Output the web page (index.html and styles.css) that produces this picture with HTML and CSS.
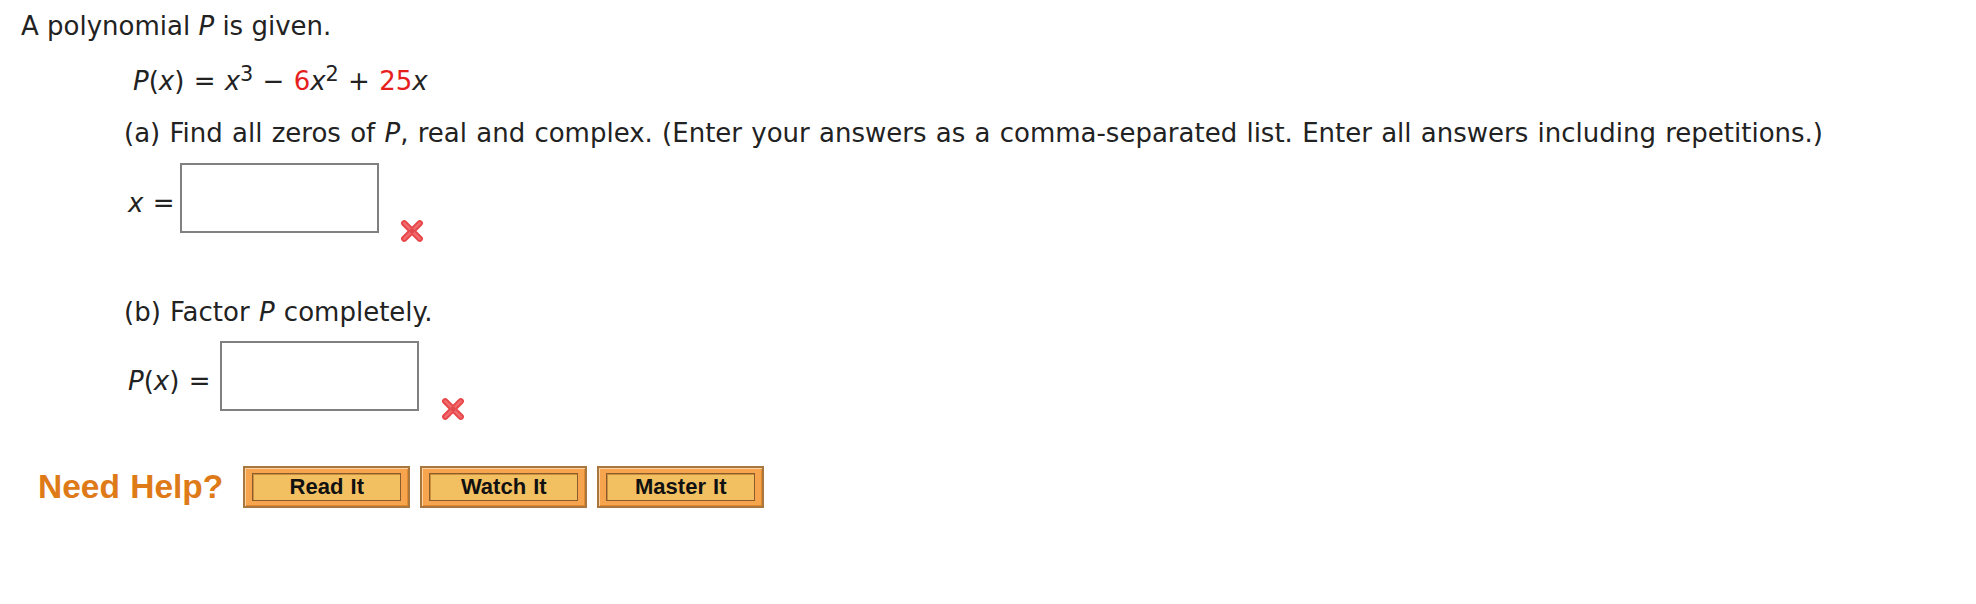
FILE: index.html
```html
<!DOCTYPE html>
<html>
<head>
<meta charset="utf-8">
<link rel="stylesheet" href="styles.css">
</head>
<body>
<div class="question">
  <p class="intro">A polynomial <i>P</i> is given.</p>
  <div class="indent">
    <p class="formula"><i>P</i>(<i>x</i>) = <i>x</i><sup>3</sup> − <span class="red">6</span><i>x</i><sup>2</sup> + <span class="red">25</span><i>x</i></p>
    <p class="part">(a) Find all zeros of <i>P</i>, real and complex. (Enter your answers as a comma-separated list. Enter all answers including repetitions.)</p>
    <div class="answer-row row-a">
      <span class="label"><i>x</i> =</span>
      <span class="box"></span>
      <svg class="wrong" width="26" height="26" viewBox="0 0 25 25">
        <path d="M5 5 L20 20 M20 5 L5 20" stroke="#e8474a" stroke-width="6" stroke-linecap="round"/>
        <path d="M5 5 L20 20 M20 5 L5 20" stroke="#ef6b6e" stroke-width="2.4" stroke-linecap="round"/>
        <rect x="10.5" y="10.5" width="4" height="4" fill="#e04a4c"/>
      </svg>
    </div>
    <p class="part part-b">(b) Factor <i>P</i> completely.</p>
    <div class="answer-row row-b">
      <span class="label"><i>P</i>(<i>x</i>) =</span>
      <span class="box"></span>
      <svg class="wrong" width="26" height="26" viewBox="0 0 25 25">
        <path d="M5 5 L20 20 M20 5 L5 20" stroke="#e8474a" stroke-width="6" stroke-linecap="round"/>
        <path d="M5 5 L20 20 M20 5 L5 20" stroke="#ef6b6e" stroke-width="2.4" stroke-linecap="round"/>
        <rect x="10.5" y="10.5" width="4" height="4" fill="#e04a4c"/>
      </svg>
    </div>
  </div>
  <div class="help">
    <span class="need">Need Help?</span>
    <span class="btn"><span class="btn-in">Read It</span></span>
    <span class="btn"><span class="btn-in">Watch It</span></span>
    <span class="btn"><span class="btn-in">Master It</span></span>
  </div>
</div>
</body>
</html>
```
FILE: styles.css
```css
html, body {
  margin: 0;
  padding: 0;
  background: #ffffff;
}
.question {
  font-family: "DejaVu Sans", Verdana, sans-serif;
  font-size: 26px;
  line-height: 30px;
  word-spacing: 1px;
  color: #222222;
  padding: 11px 0 0 21px;
}
p {
  margin: 0;
}
.intro {
  height: 30px;
  word-spacing: 0;
}
.indent {
  padding-left: 103px;
}
.formula {
  margin-top: 25px;
  padding-left: 9px;
  word-spacing: 1px;
}
sup {
  font-size: 0.8em;
  line-height: 0;
  vertical-align: 0.45em;
}
.red {
  color: #e61e1e;
}
.part {
  margin-top: 22px;
}
.answer-row {
  display: flex;
  align-items: flex-start;
  padding-left: 4px;
}
.row-a {
  margin-top: 15px;
}
.label {
  margin-top: 25px;
  white-space: pre;
}
.box {
  display: block;
  width: 195px;
  height: 66px;
  border: 2px solid #808080;
  margin-left: 6px;
  background: #fff;
}
.row-b .box {
  margin-left: 10px;
}
.wrong {
  display: block;
  margin-top: 55px;
  margin-left: 20px;
}
.row-b .wrong {
  margin-left: 21px;
}
.part-b {
  margin-top: 53px;
}
.row-b {
  margin-top: 14px;
}
.help {
  display: flex;
  align-items: center;
  margin-top: 44px;
  padding-left: 17px;
}
.need {
  font-family: "Liberation Sans", Arial, sans-serif;
  font-weight: bold;
  font-size: 33.5px;
  line-height: 42px;
  color: #de7a18;
  margin-right: 20px;
}
.btn {
  display: flex;
  box-sizing: border-box;
  width: 167px;
  height: 42px;
  border: 2px solid #a9773d;
  background: #f6a54e;
  box-shadow: inset 1px 1px 0 #fcd3a0, inset -1px -1px 0 #e08a30;
  padding: 5px 7px;
  margin-right: 10px;
}
.btn-in {
  flex: 1;
  display: flex;
  align-items: center;
  justify-content: center;
  border: 1px solid #8a5c2c;
  background: #f3c061;
  box-shadow: inset 1px 1px 0 #c98f3f;
  font-family: "Liberation Sans", Arial, sans-serif;
  font-weight: bold;
  font-size: 22px;
  color: #111;
}
```
